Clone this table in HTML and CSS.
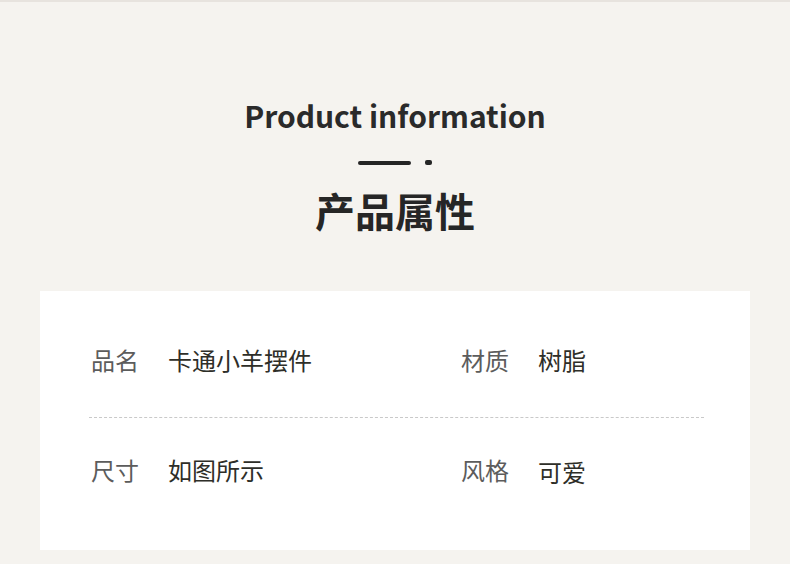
FILE: index.html
```html
<!DOCTYPE html>
<html lang="zh-CN">
<head>
<meta charset="utf-8">
<title>Product information</title>
<link rel="stylesheet" href="styles.css">
</head>
<body>
<div class="page">
  <header class="heading">
    <h1 class="title-en">Product information</h1>
    <div class="divider"><span class="bar"></span><span class="dot"></span></div>
    <h2 class="title-cn">产品属性</h2>
  </header>
  <section class="card">
    <div class="row row-first">
      <div class="cell"><span class="label">品名</span><span class="value">卡通小羊摆件</span></div>
      <div class="cell"><span class="label">材质</span><span class="value">树脂</span></div>
    </div>
    <div class="row row-last">
      <div class="cell"><span class="label">尺寸</span><span class="value">如图所示</span></div>
      <div class="cell"><span class="label">风格</span><span class="value value-low">可爱</span></div>
    </div>
  </section>
</div>
</body>
</html>
```
FILE: styles.css
```css
html, body {
  margin: 0;
  padding: 0;
  background: #f5f3ef;
}
body {
  font-family: "Noto Sans CJK SC", "Noto Sans", sans-serif;
  width: 790px;
  height: 564px;
  overflow: hidden;
}
.page {
  border-top: 2px solid #e7e3de;
  padding: 0 40px;
}
.heading {
  display: flex;
  flex-direction: column;
  align-items: center;
}
.title-en {
  margin: 93px 0 0;
  font-size: 30px;
  line-height: 40px;
  font-weight: 700;
  color: #2a2a2a;
  letter-spacing: 0;
}
.divider {
  display: flex;
  align-items: center;
  gap: 14px;
  margin-top: 25px;
  height: 5px;
}
.bar {
  width: 53px;
  height: 4px;
  border-radius: 2px;
  background: #252525;
}
.dot {
  width: 7px;
  height: 5px;
  border-radius: 2px;
  background: #252525;
}
.title-cn {
  margin: 21px 0 0;
  font-size: 40px;
  line-height: 48px;
  font-weight: 700;
  color: #262626;
}
.card {
  margin-top: 57px;
  background: #ffffff;
  height: 259px;
  padding: 0 46px 0 49px;
  box-sizing: border-box;
}
.row {
  display: grid;
  grid-template-columns: 370px 1fr;
}
.row-first {
  padding: 57px 0 45px;
  border-bottom: 1px dashed #c9c9c9;
}
.row-last {
  padding: 40px 0 0;
}
.cell {
  display: flex;
  align-items: center;
  padding-left: 2px;
  height: 24px;
}
.label {
  width: 77px;
  font-size: 24px;
  color: #5c5c5c;
  font-weight: 400;
  line-height: 24px;
}
.value {
  font-size: 24px;
  color: #2e2e28;
  font-weight: 400;
  line-height: 24px;
}
.value-low {
  position: relative;
  top: 2px;
}
```
